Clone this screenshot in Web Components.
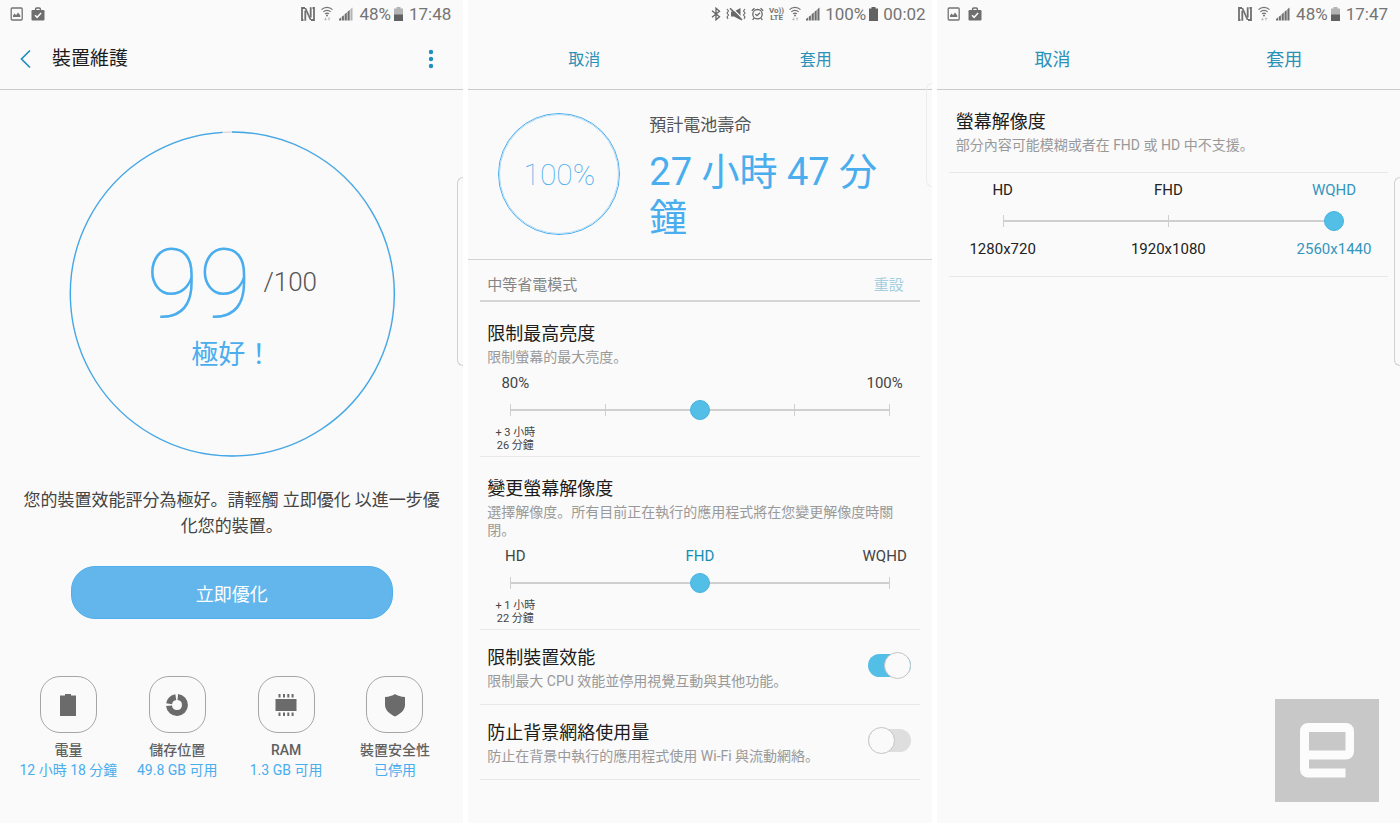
<!DOCTYPE html>
<html lang="zh-Hant">
<head>
<meta charset="utf-8">
<meta name="viewport" content="width=device-width, initial-scale=1">
<title>裝置維護</title>
<style>
  html, body { margin: 0; background: #fff; }
  body {
    font-family: Roboto, "Noto Sans CJK JP", sans-serif;
    -webkit-locale: "ja";
    color: #222;
    --panel: #fafafa;
    --blue: #49adee;
    --teal: #2a91b8;
    --accent: #54bfe6;
    --line: #e8e8e8;
    --muted: #999;
  }
</style>
</head>
<body>
<screen-gallery>
  <phone-screen handle="high">
    <status-bar slot="top" notices battery="48" time="17:48" icons="nfc wifi signal-dim"></status-bar>
    <title-bar slot="top">裝置維護</title-bar>
    <device-score score="99" total="100" verdict="極好！"></device-score>
    <optimize-panel action="立即優化">您的裝置效能評分為極好。請輕觸 立即優化 以進一步優化您的裝置。</optimize-panel>
    <metric-list>
      <metric-tile icon="battery" name="電量">12 小時 18 分鐘</metric-tile>
      <metric-tile icon="storage" name="儲存位置">49.8 GB 可用</metric-tile>
      <metric-tile icon="ram" name="RAM">1.3 GB 可用</metric-tile>
      <metric-tile icon="shield" name="裝置安全性">已停用</metric-tile>
    </metric-list>
  </phone-screen>

  <phone-screen handle="low">
    <status-bar slot="top" tight battery="100" time="00:02" icons="bluetooth mute alarm volte wifi signal"></status-bar>
    <action-bar slot="top" cancel="取消" apply="套用"></action-bar>
    <battery-summary level="100%" caption="預計電池壽命">27 小時 47 分鐘</battery-summary>
    <setting-list>
      <mode-heading reset="重設">中等省電模式</mode-heading>
      <slider-setting name="限制最高亮度" detail="限制螢幕的最大亮度。" steps="5" value="2"
        above="80%||100%" below="+ 3 小時 26 分鐘||"></slider-setting>
      <slider-setting name="變更螢幕解像度" detail="選擇解像度。所有目前正在執行的應用程式將在您變更解像度時關閉。" steps="3" value="1"
        above="HD|FHD|WQHD" active="1" below="+ 1 小時 22 分鐘||"></slider-setting>
      <toggle-setting name="限制裝置效能" detail="限制最大 CPU 效能並停用視覺互動與其他功能。" checked></toggle-setting>
      <toggle-setting name="防止背景網絡使用量" detail="防止在背景中執行的應用程式使用 Wi-Fi 與流動網絡。"></toggle-setting>
    </setting-list>
  </phone-screen>

  <phone-screen handle="high">
    <status-bar slot="top" notices battery="48" time="17:47" icons="nfc wifi signal"></status-bar>
    <action-bar slot="top" large cancel="取消" apply="套用"></action-bar>
    <setting-list>
      <slider-setting wide name="螢幕解像度" detail="部分內容可能模糊或者在 FHD 或 HD 中不支援。" steps="3" value="2"
        above="HD|FHD|WQHD" active="2" below="1280x720|1920x1080|2560x1440"></slider-setting>
    </setting-list>
    <site-mark></site-mark>
  </phone-screen>
</screen-gallery>

<script>
const GLYPHS = {
  picture: '<svg width="13" height="14" viewBox="0 0 13 14"><rect x="1.200" y="1" width="11" height="12" rx="1" fill="none" stroke="#747474" stroke-width="1.300"/><path d="M3 10V8.600l1.600-2 1.500 1.600L8 5.500l2.300 2.900V10z" fill="#747474"/></svg>',
  bag: '<svg width="14" height="14" viewBox="0 0 14 14"><path d="M4.600 3.500V2.200c0-.8.4-1.200 1.200-1.200h2.400c.8 0 1.200.4 1.200 1.200v1.300" fill="none" stroke="#6e6e6e" stroke-width="1.400"/><rect x=".5" y="3" width="13" height="10.500" rx="1.200" fill="#6e6e6e"/><path d="M4 8.200l2.100 2.100 4-4.300" fill="none" stroke="#fafafa" stroke-width="1.500"/></svg>',
  nfc: '<svg width="14" height="14" viewBox="0 0 14 14"><path d="M4 1H1v12h1.500M10 13h3V1h-1.500" fill="none" stroke="#707070" stroke-width="1.800"/><path d="M4.300 13.800V3.500M9.700.2v10.300" fill="none" stroke="#707070" stroke-width="1.800"/><path d="M3.400 1h1.800l5.400 12H8.800z" fill="#707070"/></svg>',
  wifi: '<svg width="12" height="16" viewBox="0 0 12 16"><g fill="none" stroke="#747474" stroke-width="1.200"><path d="M.5 3.700C3.500.600 8.500.600 11.500 3.700"/><path d="M2.300 5.800c2-2 5.400-2 7.400 0"/><path d="M4 7.900c1.200-1 2.800-1 4 0"/></g><circle cx="6" cy="9.600" r="1" fill="#747474"/><path d="M4.500 11.500v2.500M3.300 13l1.200 1.300L5.700 13M8 14.500V12M6.900 13L8 11.700 9.100 13" fill="none" stroke="#b9b9b9" stroke-width=".9"/></svg>',
  signal: '<svg width="14" height="14" viewBox="0 0 14 14"><path d="M0 13.500V12l2-1.500v3zM2.700 13.500V9.800L4.900 8.200v5.300zM5.600 13.500V7.200L7.800 5.500v8zM8.500 13.500V4.700L10.700 3v10.500zM11.400 13.500V2.200L13.500.5v13z" fill="#6e6e6e"/></svg>',
  'signal-dim': '<svg width="14" height="14" viewBox="0 0 14 14"><path d="M0 13.500V12l2-1.500v3zM2.700 13.500V9.800L4.900 8.200v5.300zM5.600 13.500V7.200L7.800 5.500v8zM8.500 13.500V4.700L10.700 3v10.500z" fill="#6e6e6e"/><path d="M11.400 13.500V2.200L13.500.5v13z" fill="#b4b4b4"/></svg>',
  bluetooth: '<svg width="10" height="14" viewBox="0 0 10 14"><path d="M1 3.800l7.500 6L5 12.800V1.200l3.500 3L1 10.200" fill="none" stroke="#646464" stroke-width="1.300"/></svg>',
  mute: '<svg width="20" height="14" viewBox="0 0 20 14"><path d="M5 4.500h3L14.500 1v12L8 9.500H5z" fill="#686868"/><path d="M5.500.5l11 11" stroke="#fafafa" stroke-width="1.300"/><path d="M4 1.300L16 13" stroke="#686868" stroke-width="1.600"/><path d="M1 2l1.500 2L1 6l1.500 2L1 10l1 2M19 2l-1.500 2L19 6l-1.500 2L19 10l-1 2" fill="none" stroke="#686868" stroke-width="1.100"/></svg>',
  alarm: '<svg width="13" height="14" viewBox="0 0 13 14"><circle cx="6.500" cy="7.200" r="4.700" fill="none" stroke="#686868" stroke-width="1.300"/><path d="M4.300 7l1.700 1.700L9 5.700M.8 3.800L3.500 1.200M12.200 3.800L9.500 1.200M3 11l-1.300 2M10 11l1.300 2" fill="none" stroke="#686868" stroke-width="1.300"/></svg>'
};

const TILE_GLYPHS = {
  battery: '<path d="M9 1h6v1.500h5V23H4V2.500h5z"/>',
  storage: '<path fill="none" stroke="#6b6b6b" stroke-width="6" d="M12.800 4A8 8 0 1 1 4 12.800"/><path fill="none" stroke="#6b6b6b" stroke-width="6" d="M4.100 10.800A8 8 0 0 1 10.800 4.100"/>',
  ram: '<path d="M1.500 6h21v12h-21zM4.500 1h2v3.500h-2zM9 1h2v3.500H9zM13.300 1h2v3.500h-2zM17.600 1h2v3.500h-2zM4.500 19.500h2V23h-2zM9 19.500h2V23H9zM13.300 19.500h2V23h-2zM17.600 19.500h2V23h-2z"/>',
  shield: '<path d="M12 1c2.500 1.800 6 2.700 10 3v8c0 5-4.500 9-10 11.500C6.500 21 2 17 2 12V4c4-.300 7.500-1.200 10-3z"/>'
};

class Part extends HTMLElement {
  connectedCallback() {
    if (this.shadowRoot) return;
    this.attachShadow({ mode: 'open' }).innerHTML =
      `<style>:host{display:block}*{box-sizing:border-box}h1,h2,p{margin:0;font-weight:400}button{font:inherit;border:0;padding:0;background:none;cursor:pointer}svg{display:block;flex:none}${this.constructor.css}</style>${this.view()}`;
  }
  a(name) { return this.getAttribute(name) || ''; }
}
const define = (name, css, view) => customElements.define(name, class extends Part {
  static css = css;
  view() { return view(this); }
});

define('screen-gallery', `
  :host { display: grid; grid-template-columns: repeat(3, minmax(0, 1fr)); gap: 5px; min-height: 100vh; }
`, () => '<slot></slot>');

define('phone-screen', `
  :host { position: relative; display: flex; flex-direction: column; background: var(--panel); overflow: hidden; }
  header { border-bottom: 1px solid #cacaca; }
  main { flex: 1; display: flex; flex-direction: column; }
  .handle { position: absolute; right: -1px; top: 177px; width: 7px; height: 189px; border: 1px solid #cfcfcf; border-right: 0; border-radius: 6px 0 0 6px; }
  :host([handle="low"]) .handle { top: 83px; height: 104px; border-color: #ececec; }
`, () => '<header><slot name="top"></slot></header><main><slot></slot></main><div class="handle"></div>');

define('status-bar', `
  :host { display: flex; justify-content: space-between; align-items: center; height: 28px; padding: 0 12px 0 10px; font-size: 17px; line-height: 20px; color: #747474; }
  :host([tight]) { padding-right: 6px; }
  div { display: flex; align-items: center; }
  .left { gap: 8px; }
  .right { gap: 6px; }
  :host([tight]) .right { gap: 5px; }
  .level { display: flex; align-items: center; gap: 3px; }
  .lte { font-size: 8px; line-height: 7px; font-weight: 700; text-align: center; }
  .lte span { display: block; }
`, el => `
  <div class="left">${el.hasAttribute('notices') ? GLYPHS.picture + GLYPHS.bag : ''}</div>
  <div class="right">
    ${el.a('icons').split(' ').map(n => n === 'volte' ? '<span class="lte"><span>Vo))</span><span>LTE</span></span>' : GLYPHS[n]).join('')}
    <span class="level">${el.a('battery')}%
      <svg width="9" height="14" viewBox="0 0 9 14"><path d="M2.500 0h4v1.500H9V14H0V1.500h2.500z" fill="${el.a('battery') === '100' ? '#626262' : '#b4b4b4'}"/><path d="M0 7.500h9V14H0z" fill="#626262"/></svg>
    </span>
    <span>${el.a('time')}</span>
  </div>`);

define('title-bar', `
  :host { display: flex; align-items: center; height: 61px; padding: 0 20px; }
  h1 { flex: 1; margin-left: 20px; font-size: 19px; line-height: 28px; color: #1c1c1c; }
  button { display: flex; }
`, () => `
  <button aria-label="返回"><svg width="12" height="20" viewBox="0 0 12 20"><path d="M10 1.500L1.500 10l8.500 8.500" fill="none" stroke="#1f8fbd" stroke-width="1.700"/></svg></button>
  <h1><slot></slot></h1>
  <button aria-label="更多選項"><svg width="24" height="20" viewBox="0 0 24 20" fill="#1f8fbd"><circle cx="12" cy="3" r="2.200"/><circle cx="12" cy="10" r="2.200"/><circle cx="12" cy="17" r="2.200"/></svg></button>`);

define('action-bar', `
  :host { display: grid; grid-template-columns: 1fr 1fr; height: 61px; font-size: 16px; color: var(--teal); }
  :host([large]) { font-size: 18px; }
  button { color: inherit; padding-bottom: 2px; }
`, el => `<button>${el.a('cancel')}</button><button>${el.a('apply')}</button>`);

define('device-score', `
  :host { display: grid; justify-items: center; margin-top: 41px; }
  svg, .text { grid-area: 1 / 1; }
  .text { align-self: center; padding-top: 34px; text-align: center; color: var(--blue); }
  .row { display: flex; align-items: center; gap: 12px; height: 74px; }
  .score { font-size: 96px; line-height: 74px; font-weight: 100; }
  .total { padding-bottom: 4px; font-size: 26px; line-height: 32px; font-weight: 300; color: #555; }
  .verdict { margin-top: 14px; font-size: 27px; line-height: 40px; }
`, el => `
  <svg width="326" height="326" viewBox="0 0 326 326" fill="none" stroke-width="1.300">
    <circle cx="163" cy="163" r="162" stroke="#dcdcdc"/>
    <path d="M163 1A162 162 0 1 1 153.500 1.300" stroke="#3ea8ec"/>
  </svg>
  <div class="text">
    <div class="row"><span class="score">${el.a('score')}</span><span class="total">/${el.a('total')}</span></div>
    <p class="verdict">${el.a('verdict')}</p>
  </div>`);

define('optimize-panel', `
  :host { display: flex; flex-direction: column; align-items: center; margin-top: 30px; padding: 0 20px; }
  p { font-size: 17px; line-height: 26px; text-align: center; color: #444; }
  button { width: 76%; height: 53px; margin-top: 27px; border: 1px solid #4eb0ec; border-radius: 24px; background: #62b6ec; color: #fff; font-size: 18px; }
`, el => `<p><slot></slot></p><button>${el.a('action')}</button>`);

define('metric-list', `
  :host { display: grid; grid-template-columns: repeat(4, minmax(0, 1fr)); margin-top: 57px; padding: 0 14px; }
`, () => '<slot></slot>');

define('metric-tile', `
  button { display: flex; flex-direction: column; align-items: center; width: 100%; font-size: 14px; line-height: 20px; white-space: nowrap; }
  .box { display: grid; place-items: center; width: 57px; height: 57px; margin-bottom: 7px; border: 1px solid #a6a6a6; border-radius: 20px; }
  .name { font-weight: 500; color: #606060; }
  .value { color: var(--blue); }
`, el => `<button>
  <span class="box"><svg width="24" height="24" viewBox="0 0 24 24" fill="#6b6b6b">${TILE_GLYPHS[el.a('icon')]}</svg></span>
  <span class="name">${el.a('name')}</span><span class="value"><slot></slot></span></button>`);

define('battery-summary', `
  :host { display: flex; gap: 29px; height: 146px; padding: 23px 26px 0 30px; border-bottom: 1px solid #d2d2d2; }
  .ring { flex: none; display: grid; place-items: center; width: 122px; height: 122px; border: 1px solid var(--blue); outline: 1px solid #b4dcf7; outline-offset: -2px; border-radius: 50%; font-size: 30px; font-weight: 100; color: var(--blue); }
  .caption { font-size: 17px; line-height: 24px; color: #555; }
  .time { margin-top: 12px; font-size: 38px; line-height: 46px; color: var(--blue); }
`, el => `<div class="ring">${el.a('level')}</div>
  <div><p class="caption">${el.a('caption')}</p><p class="time"><slot></slot></p></div>`);

define('setting-list', `:host { padding: 0 12px; }`, () => '<slot></slot>');

define('mode-heading', `
  :host { display: flex; justify-content: space-between; align-items: flex-end; height: 36px; padding: 0 16px 4px 7px; border-bottom: 2px solid #d6d6d6; font-size: 15px; line-height: 22px; }
  h2 { font-size: 15px; color: #858585; }
  button { color: #a6cfdf; }
`, el => `<h2><slot></slot></h2><button>${el.a('reset')}</button>`);

const settingText = `
  .name { display: block; font-size: 18px; line-height: 28px; color: #1c1c1c; }
  .detail { font-size: 14px; line-height: 18px; color: var(--muted); }`;

define('slider-setting', `
  :host { padding: 18px 0 4px; border-bottom: 1px solid var(--line); --end: 70px; --inset: 20px; }
  ${settingText}
  .head { padding: 0 16px 0 7px; }
  .labels { display: flex; justify-content: space-between; text-align: center; font-size: 15px; line-height: 18px; color: #444; }
  .labels > span { width: var(--end); }
  .above { margin-top: 8px; }
  .below { margin-top: 6px; font-size: 11px; line-height: 13px; }
  .below > span { padding: 0 14px; }
  .labels .active { color: #128fb5; }
  .control { display: grid; margin: 8px var(--inset) 0; }
  .ticks, input { grid-area: 1 / 1; height: 20px; }
  .ticks { display: flex; justify-content: space-between; align-items: center; margin: 0 10px; background: linear-gradient(#cfcfcf, #cfcfcf) center / 100% 2px no-repeat; }
  .ticks i { width: 1px; height: 12px; background: #cfcfcf; }
  input { -webkit-appearance: none; appearance: none; width: 100%; margin: 0; background: none; }
  input::-webkit-slider-thumb { -webkit-appearance: none; width: 20px; height: 20px; border: 1px solid #43b2e2; border-radius: 50%; background: var(--accent); }
  :host([wide]) { padding-bottom: 18px; --end: 108px; --inset: 44px; }
  :host([wide]) .head { padding-bottom: 18px; }
  :host([wide]) .above { padding-top: 8px; margin-top: 0; border-top: 1px solid var(--line); }
  :host([wide]) .labels { color: #222; }
  :host([wide]) .labels .active { color: #3495bd; }
  :host([wide]) .control { margin-top: 12px; }
  :host([wide]) .below { margin-top: 9px; font-size: 15px; line-height: 18px; }
  :host([wide]) .below > span { padding: 0; }
`, el => {
  const cells = name => el.a(name).split('|').map((t, i) =>
    `<span class="${String(i) === el.a('active') ? 'active' : ''}">${t}</span>`).join('');
  const steps = Number(el.a('steps'));
  return `
  <div class="head"><label class="name" for="range">${el.a('name')}</label><p class="detail">${el.a('detail')}</p></div>
  <div class="labels above">${cells('above')}</div>
  <div class="control"><div class="ticks">${'<i></i>'.repeat(steps)}</div><input id="range" type="range" min="0" max="${steps - 1}" value="${el.a('value')}"></div>
  <div class="labels below">${cells('below')}</div>`;
});

define('toggle-setting', `
  :host { display: flex; align-items: center; justify-content: space-between; padding: 14px 9px 14px 7px; border-bottom: 1px solid var(--line); }
  ${settingText}
  input { -webkit-appearance: none; appearance: none; flex: none; display: flex; align-items: center; width: 43px; height: 23px; margin: 0 0 4px; border-radius: 12px; background: #dedede; }
  input::before { content: ""; width: 25px; height: 25px; border: 1px solid #c4c4c4; border-radius: 50%; background: var(--panel); }
  input:checked { justify-content: flex-end; background: var(--accent); }
`, el => `<div><label class="name" for="toggle">${el.a('name')}</label><p class="detail">${el.a('detail')}</p></div>
  <input id="toggle" type="checkbox" role="switch"${el.hasAttribute('checked') ? ' checked' : ''}>`);

define('site-mark', `
  :host { align-self: flex-end; margin: auto 21px 21px 0; background: #c8c8c8; }
`, () => `<svg width="104" height="103" viewBox="0 0 104 103" role="img" aria-label="e">
  <path fill="#fcfcfc" fill-rule="evenodd" d="M33 24h38a8 8 0 0 1 8 8v20.500a8 8 0 0 1-8 8H34v9h36.500v9H33a8 8 0 0 1-8-8V32a8 8 0 0 1 8-8zM34 33v18.500h36.500V33z"/></svg>`);
</script>
</body>
</html>
